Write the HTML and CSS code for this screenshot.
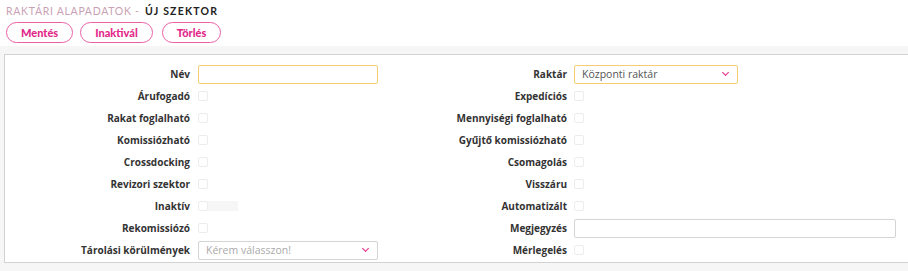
FILE: index.html
```html
<!DOCTYPE html>
<html lang="hu">
<head>
    <meta charset="UTF-8">
    <title>Raktári alapadatok - Új szektor</title>
    <link rel="stylesheet" href="styles.css">
</head>
<body>

    <div class="header">
        <div class="title">
            <span class="crumb">Raktári alapadatok -</span>
            <span class="current">Új szektor</span>
        </div>
        <div class="actions">
            <button class="btn">Mentés</button>
            <button class="btn">Inaktivál</button>
            <button class="btn">Törlés</button>
        </div>
    </div>

    <div class="panel">
        <div class="col col-left">
            <label>Név</label>
            <div><input type="text" class="field field-focus"></div>

            <label>Árufogadó</label>
            <div><span class="check"></span></div>

            <label>Rakat foglalható</label>
            <div><span class="check"></span></div>

            <label>Komissiózható</label>
            <div><span class="check"></span></div>

            <label>Crossdocking</label>
            <div><span class="check"></span></div>

            <label>Revizori szektor</label>
            <div><span class="check"></span></div>

            <label>Inaktív</label>
            <div class="inactive"><span class="check"></span><span class="track"></span></div>

            <label>Rekomissiózó</label>
            <div><span class="check"></span></div>

            <label>Tárolási körülmények</label>
            <div>
                <div class="select field">
                    <span class="placeholder">Kérem válasszon!</span>
                    <span class="caret"></span>
                </div>
            </div>
        </div>

        <div class="col col-right">
            <label>Raktár</label>
            <div>
                <div class="select field field-focus narrow">
                    <span>Központi raktár</span>
                    <span class="caret"></span>
                </div>
            </div>

            <label>Expedíciós</label>
            <div><span class="check"></span></div>

            <label>Mennyiségi foglalható</label>
            <div><span class="check"></span></div>

            <label>Gyűjtő komissiózható</label>
            <div><span class="check"></span></div>

            <label>Csomagolás</label>
            <div><span class="check"></span></div>

            <label>Visszáru</label>
            <div><span class="check"></span></div>

            <label>Automatizált</label>
            <div><span class="check"></span></div>

            <label>Megjegyzés</label>
            <div><input type="text" class="field wide"></div>

            <label>Mérlegelés</label>
            <div><span class="check"></span></div>
        </div>
    </div>

</body>
</html>
```

FILE: styles.css
```css
body {
    margin: 0;
    font-family: "Open Sans", Arial, sans-serif;
    background-color: #f6f6f6;
    color: #333;
    height: 271px;
    overflow: hidden;
}
.header {
    background-color: #fff;
    padding: 5px 6px 2px;
    height: 39px;
}
.title {
    font-family: Lato, "Open Sans", sans-serif;
    font-size: 10.5px;
    letter-spacing: 0.7px;
    text-transform: uppercase;
    line-height: 13px;
    white-space: nowrap;
}
.crumb {
    color: #c9a1b4;
}
.current {
    color: #222;
    font-weight: bold;
    letter-spacing: 1.2px;
    margin-left: 2px;
}
.actions {
    display: flex;
    gap: 7px;
    margin-top: 4px;
}
.btn {
    font-family: Lato, "Open Sans", sans-serif;
    font-size: 11px;
    font-weight: 900;
    color: #e2288a;
    background: #fff;
    border: 1px solid #ea5fa6;
    border-radius: 11px;
    height: 21px;
    padding: 0 14px;
    cursor: pointer;
}
.btn:nth-child(3) {
    margin-left: 2px;
}
.panel {
    margin: 8px 0 0 4px;
    background: #fff;
    border: 1px solid #d2d2d2;
    border-right: none;
    padding: 8px 0 1px;
    display: grid;
    grid-template-columns: 379px 1fr;
}
.col {
    display: grid;
    grid-auto-rows: 22px;
    align-items: center;
    column-gap: 8px;
}
.col-left {
    grid-template-columns: 185px 1fr;
}
.col-right {
    grid-template-columns: 183px 1fr;
    column-gap: 7px;
}
label {
    font-size: 10px;
    font-weight: 700;
    color: #333;
    text-align: right;
    white-space: nowrap;
}
.col > div {
    display: flex;
    align-items: center;
}
.field {
    box-sizing: border-box;
    width: 180px;
    height: 19px;
    border: 1px solid #d4d4d4;
    border-radius: 2px;
    background: #fff;
    font-family: "Open Sans", Arial, sans-serif;
    font-size: 10.5px;
    color: #555;
    padding: 0 7px;
}
.field.field-focus {
    border: 1px solid #f7cd74;
}
.narrow {
    width: 164px;
}
.wide {
    width: 322px;
}
.select {
    display: flex;
    align-items: center;
    justify-content: space-between;
}
.placeholder {
    color: #aaa;
}
.caret {
    width: 4px;
    height: 4px;
    border-right: 1.5px solid #e2288a;
    border-bottom: 1.5px solid #e2288a;
    transform: rotate(45deg);
    margin: -3px 2px 0 0;
}
.check {
    box-sizing: border-box;
    width: 10px;
    height: 10px;
    border: 1px solid #ececec;
    border-radius: 2px;
    background: #fff;
}
.track {
    width: 30px;
    height: 10px;
    background: #f6f6f6;
}
```
